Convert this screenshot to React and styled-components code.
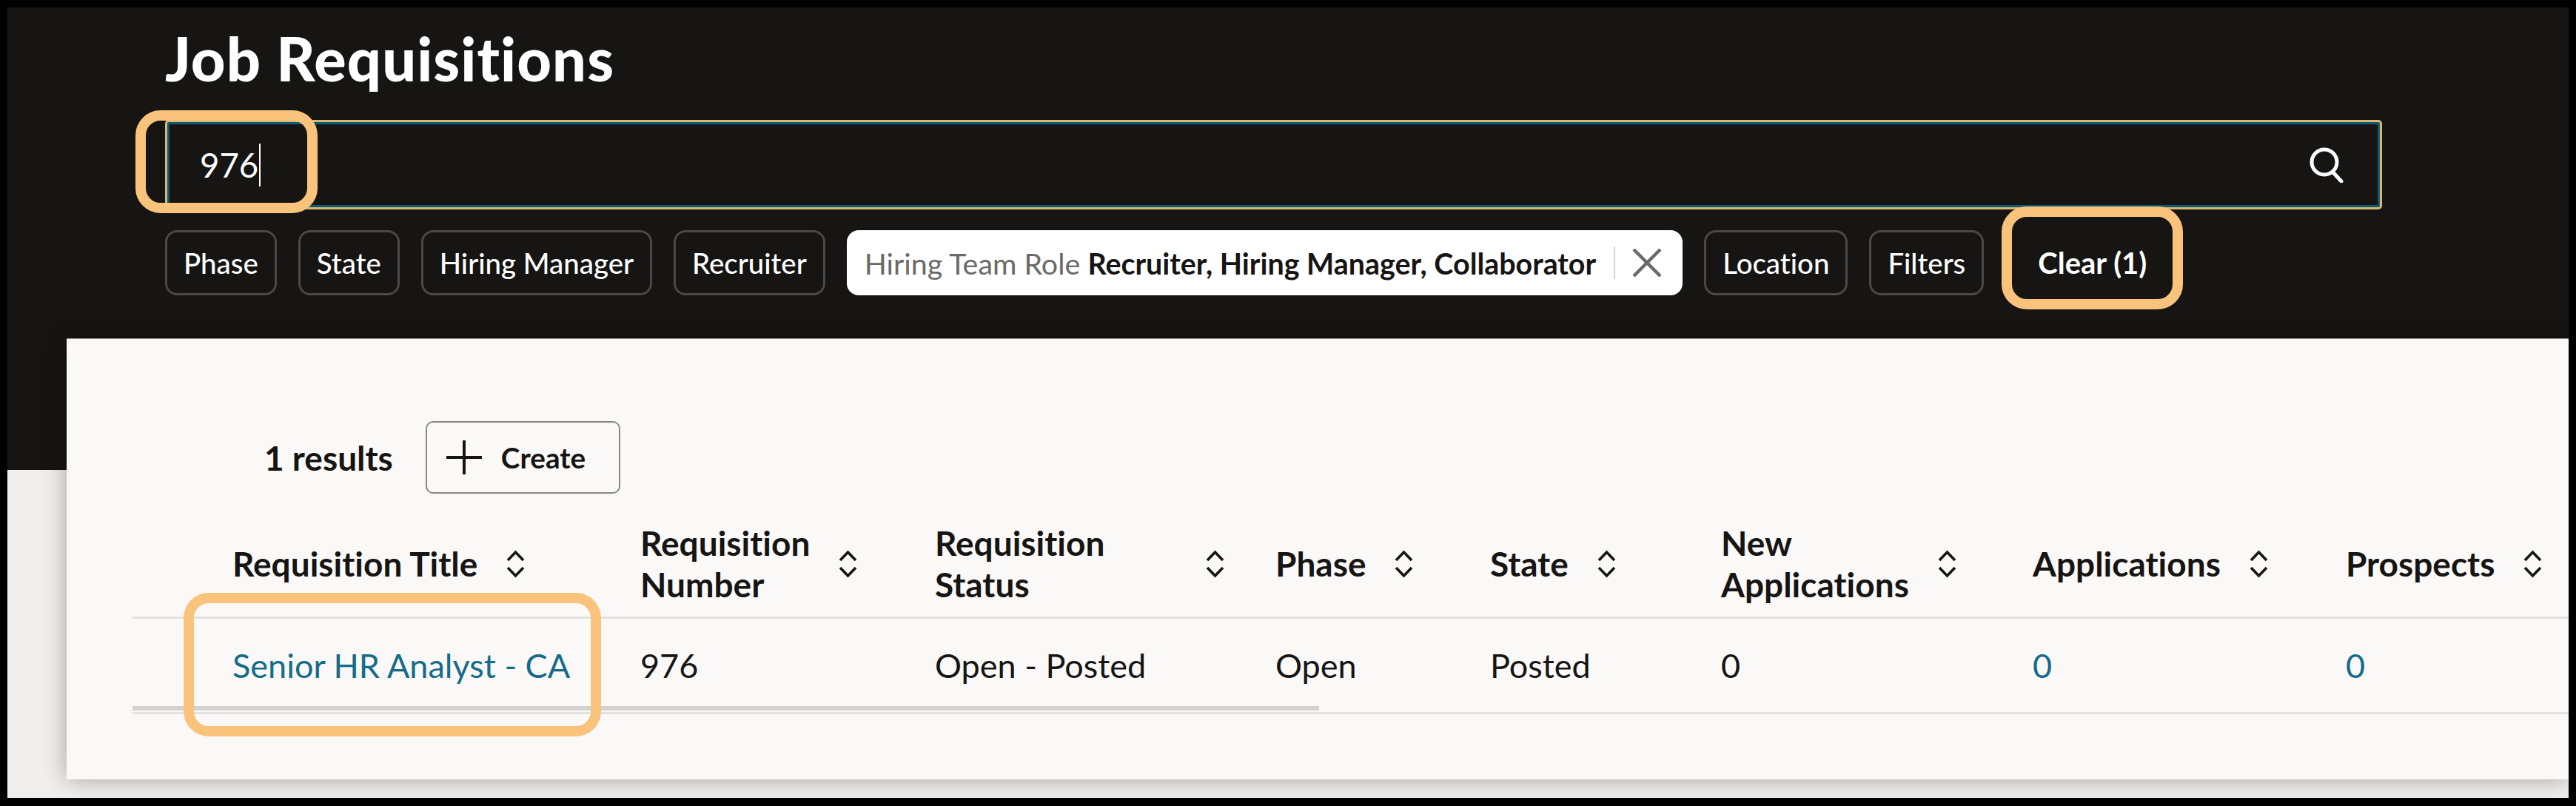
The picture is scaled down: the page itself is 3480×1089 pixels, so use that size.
import React from 'react'
import styled, { createGlobalStyle } from 'styled-components'

const GlobalStyle = createGlobalStyle`
  html, body { margin: 0; padding: 0; background: #000; overflow: hidden; }
  * { box-sizing: border-box; }
`

const columns = [
  { label: ['Requisition Title'], value: 'Senior HR Analyst - CA', link: true },
  { label: ['Requisition', 'Number'], value: '976' },
  { label: ['Requisition', 'Status'], value: 'Open - Posted', labelMin: 327 },
  { label: ['Phase'], value: 'Open' },
  { label: ['State'], value: 'Posted' },
  { label: ['New', 'Applications'], value: '0' },
  { label: ['Applications'], value: '0', link: true },
  { label: ['Prospects'], value: '0', link: true },
]

const Frame = styled.div`
  position: relative;
  width: 3480px;
  height: 1089px;
  padding: 10px 10px 11px;
  background: #000;
  font-family: Lato, "Noto Sans", sans-serif;
  font-variant-ligatures: none;
  overflow: hidden;
`

const Screen = styled.div`
  display: flex;
  flex-direction: column;
  height: 100%;
  background: #f1efed;
`

const Header = styled.header`
  height: 625px;
  padding: 29px 0 0 213px;
  flex: none;
  background: #161513;
  color: #fff;
`

const Title = styled.h1`
  margin: 0 0 43px;
  font-size: 81px;
  line-height: 80px;
  font-weight: 900;
  letter-spacing: 1.1px;
`

const SearchBox = styled.div`
  display: flex;
  align-items: center;
  width: 2995px;
  height: 121px;
  padding: 0 48px 0 44px;
  border: 3px solid #d9b86f;
  border-radius: 5px;
  box-shadow: inset 0 0 0 3px #0d5a73;
  font-size: 45.5px;
`

const Caret = styled.span`
  display: inline-block;
  width: 2px;
  height: 58px;
  margin-left: 1px;
  background: #fff;
`

const SearchIcon = styled.svg`
  width: 48px;
  height: 48px;
  margin-left: auto;
`

const ChipRow = styled.div`
  display: flex;
  gap: 29px;
  height: 88px;
  margin-top: 28px;
`

const Chip = styled.button`
  display: flex;
  align-items: center;
  padding: 0 22px;
  border: 3px solid #4a4947;
  border-radius: 16px;
  background: transparent;
  color: #fff;
  font: 500 38.4px Lato, "Noto Sans", sans-serif;
  font-variant-ligatures: none;
`

const ActiveChip = styled.div`
  display: flex;
  align-items: center;
  padding: 0 28px 0 24px;
  border-radius: 16px;
  background: #fff;
  color: #161513;
  font-size: 39.4px;
  white-space: pre;
`

const ChipLabel = styled.span`
  color: #6b6a66;
`

const ChipValue = styled.span`
  font-weight: 700;
`

const ChipDivider = styled.span`
  width: 2px;
  height: 44px;
  margin: 0 23px 0 24px;
  background: #d6d4d2;
`

const ClearButton = styled.button`
  padding: 0 0 0 44px;
  border: 0;
  background: transparent;
  color: #fff;
  font: 700 40px Lato, "Noto Sans", sans-serif;
`

const Panel = styled.main`
  position: relative;
  height: 595px;
  margin: -177px 0 0 80px;
  padding-top: 111px;
  flex: none;
  background: #fbf9f8;
  color: #161513;
  box-shadow: 0 -1px 0 #8f8e8c, 0 0 30px rgba(0, 0, 0, 0.32);
`

const Toolbar = styled.div`
  display: flex;
  align-items: center;
  gap: 44px;
  padding-left: 267px;
`

const ResultCount = styled.span`
  font-size: 46px;
  font-weight: 700;
`

const CreateButton = styled.button`
  display: flex;
  align-items: center;
  gap: 26px;
  width: 263px;
  height: 98px;
  padding: 0 0 0 26px;
  border: 2px solid #8a8886;
  border-radius: 10px;
  background: transparent;
  color: #161513;
  font: 700 38.7px Lato, "Noto Sans", sans-serif;
`

const Table = styled.div`
  position: relative;
  margin: 23px 0 0 89px;
`

const TableRow = styled.div`
  display: grid;
  grid-template-columns: 551px 398px 460px 290px 312px 421px 423px 1fr;
  align-items: center;
  height: ${p => p.$height}px;
  padding-left: 135px;
  border-bottom: 3px solid #e4e2e0;
`

const HeadCell = styled.div`
  display: flex;
  align-items: center;
  gap: 38px;
  font-size: 46px;
  line-height: 56px;
  font-weight: 700;
  white-space: nowrap;
`

const HeadLabel = styled.div`
  min-width: ${p => p.$min || 0}px;
`

const BodyCell = styled.div`
  font-size: 45px;
  color: ${p => (p.$link ? '#146c8a' : '#161513')};
`

const ScrollThumb = styled.div`
  position: absolute;
  left: 0;
  bottom: 5px;
  width: 1603px;
  height: 6px;
  background: #d4d2d0;
`

const Callout = styled.div`
  position: absolute;
  left: ${p => p.$x}px;
  top: ${p => p.$y}px;
  width: ${p => p.$w}px;
  height: ${p => p.$h}px;
  border: 14px solid #f9c37b;
  border-radius: 34px;
`

const SortIcon = () => (
  <svg width="27" height="38" viewBox="0 0 27 38" fill="none" stroke="#161513" strokeWidth="3.6">
    <path d="M3 14 13.5 3 24 14" />
    <path d="M3 24 13.5 35 24 24" />
  </svg>
)

const App = () => {
  return (
    <Frame>
      <GlobalStyle />
      <Screen>
        <Header>
          <Title>Job Requisitions</Title>
          <SearchBox>
            976<Caret />
            <SearchIcon viewBox="0 0 48 48" fill="none" stroke="#fff" strokeWidth="5" strokeLinecap="round">
              <circle cx="21" cy="20" r="17" />
              <path d="M32 33 44 46" />
            </SearchIcon>
          </SearchBox>
          <ChipRow>
            <Chip>Phase</Chip>
            <Chip>State</Chip>
            <Chip>Hiring Manager</Chip>
            <Chip>Recruiter</Chip>
            <ActiveChip>
              <ChipLabel>Hiring Team Role </ChipLabel>
              <ChipValue>Recruiter, Hiring Manager, Collaborator</ChipValue>
              <ChipDivider />
              <svg width="40" height="38" viewBox="0 0 40 38" stroke="#6b6a66" strokeWidth="4.5">
                <path d="M2 1 38 37M38 1 2 37" />
              </svg>
            </ActiveChip>
            <Chip>Location</Chip>
            <Chip>Filters</Chip>
            <ClearButton>Clear (1)</ClearButton>
          </ChipRow>
        </Header>
        <Panel>
          <Toolbar>
            <ResultCount>1 results</ResultCount>
            <CreateButton>
              <svg width="48" height="46" viewBox="0 0 48 46" stroke="#161513" strokeWidth="4">
                <path d="M24 0V46M0 23H48" />
              </svg>
              Create
            </CreateButton>
          </Toolbar>
          <Table>
            <TableRow $height={146}>
              {columns.map(col => (
                <HeadCell key={col.label.join(' ')}>
                  <HeadLabel $min={col.labelMin}>
                    {col.label.map(line => <div key={line}>{line}</div>)}
                  </HeadLabel>
                  <SortIcon />
                </HeadCell>
              ))}
            </TableRow>
            <TableRow $height={129}>
              {columns.map(col => (
                <BodyCell key={col.label.join(' ')} $link={col.link}>{col.value}</BodyCell>
              ))}
            </TableRow>
            <ScrollThumb />
          </Table>
        </Panel>
      </Screen>
      <Callout $x={183} $y={149} $w={246} $h={139} />
      <Callout $x={2704} $y={279} $w={245} $h={139} />
      <Callout $x={248} $y={801} $w={564} $h={194} />
    </Frame>
  )
}

export default App
